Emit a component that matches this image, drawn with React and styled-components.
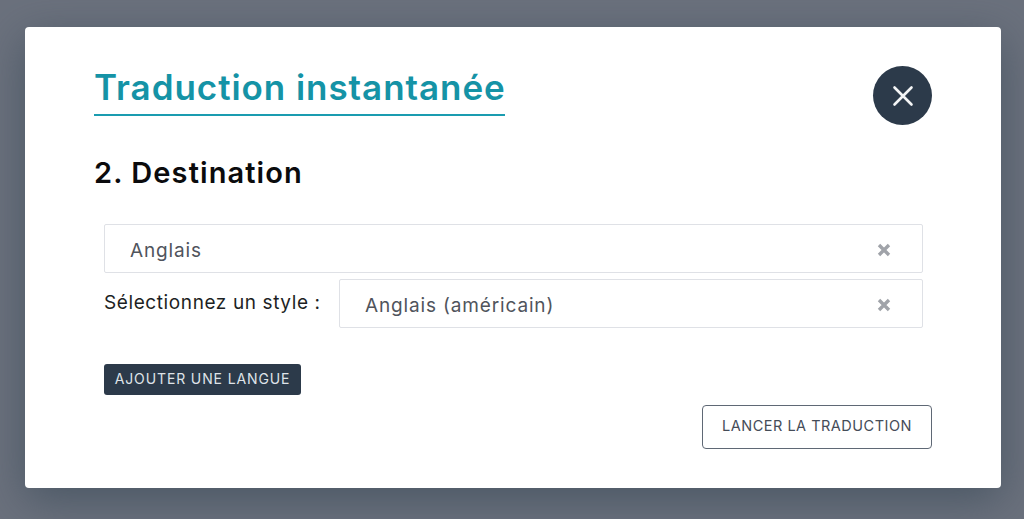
import React from 'react';
import styled, { createGlobalStyle } from 'styled-components';

const Global = createGlobalStyle`
  html, body { margin: 0; padding: 0; height: 100%; overflow: hidden; }
  body { font-family: Inter, "Noto Sans", sans-serif; }
  #root { height: 100%; }
`;

const Backdrop = styled.div`
  width: 1024px;
  height: 519px;
  box-sizing: border-box;
  padding: 27px 23px 31px 25px;
  background: #6b717d;
  overflow: hidden;
`;

const Modal = styled.div`
  box-sizing: border-box;
  height: 461px;
  padding: 42px 69px 0;
  background: #fff;
  border-radius: 4px;
  box-shadow: 0 12px 44px rgba(60, 75, 90, 0.7);
`;

const Header = styled.div`
  display: flex;
  justify-content: space-between;
  align-items: flex-start;
`;

const Title = styled.h1`
  margin: 0;
  width: 411px;
  height: 47px;
  box-sizing: border-box;
  border-bottom: 2px solid #1a9cb0;
  color: #1593a6;
  font-size: 35px;
  font-weight: 600;
  line-height: 36px;
  white-space: nowrap;
  letter-spacing: 0.95px;
`;

const CloseButton = styled.button`
  width: 59px;
  height: 59px;
  margin: -3px 0 0;
  padding: 0;
  border: 0;
  border-radius: 50%;
  background: #2c3a4a;
  display: flex;
  align-items: center;
  justify-content: center;
`;

const SectionTitle = styled.h2`
  margin: 0;
  padding-top: 30px;
  color: #0b0b0d;
  font-size: 29px;
  font-weight: 600;
  line-height: 36px;
  letter-spacing: 1.1px;
`;

const Fields = styled.div`
  margin: 33px 10px 0;
  display: flex;
  flex-direction: column;
  gap: 6px;
  width: 818.5px;
`;

const Select = styled.div`
  flex-grow: 1;
  box-sizing: border-box;
  height: 49px;
  padding: 0 31px 0 25px;
  display: flex;
  align-items: center;
  justify-content: space-between;
  border: 1px solid #dfe1e6;
  border-radius: 2px;
  color: #50545c;
  font-size: 19px;
  letter-spacing: 0.85px;
`;

const SelectValue = styled.span`
  margin-top: 4px;
`;

const StyleRow = styled.div`
  display: flex;
  align-items: flex-start;
`;

const StyleLabel = styled.label`
  width: 235px;
  flex: none;
  padding-top: 12px;
  color: #1d1f24;
  font-size: 19px;
  line-height: 24px;
  letter-spacing: 0.6px;
  white-space: nowrap;
`;

const AddButton = styled.button`
  display: block;
  width: 197px;
  height: 31px;
  margin: 36px 0 0 10px;
  padding: 0 0 2px;
  border: 0;
  border-radius: 3px;
  background: #2c3a4a;
  color: #dfe3e8;
  font-family: inherit;
  font-size: 14px;
  letter-spacing: 0.87px;
`;

const Footer = styled.div`
  display: flex;
  justify-content: flex-end;
  margin-top: 10px;
`;

const LaunchButton = styled.button`
  width: 230px;
  height: 44px;
  padding: 0 0 3px;
  background: #fff;
  border: 1px solid #5f6875;
  border-radius: 4px;
  color: #454c58;
  font-family: inherit;
  font-size: 14.5px;
  letter-spacing: 0.5px;
`;

const ClearGlyph = styled.svg`
  margin-top: 2px;
  flex: none;
`;

const CloseIcon = () => (
  <svg width="22" height="22" viewBox="0 0 22 22" aria-hidden="true">
    <path d="M2.5 2.5 19.5 19.5M19.5 2.5 2.5 19.5" stroke="#f4f5f6" strokeWidth="2.6" strokeLinecap="round" />
  </svg>
);

const ClearIcon = () => (
  <ClearGlyph width="14" height="14" viewBox="0 0 14 14" aria-hidden="true">
    <path d="M2 2 12 12M12 2 2 12" stroke="#a0a3a9" strokeWidth="3.4" />
  </ClearGlyph>
);

export default function App() {
  return (
    <Backdrop>
      <Global />
      <Modal>
        <Header>
          <Title>Traduction instantanée</Title>
          <CloseButton aria-label="Fermer"><CloseIcon /></CloseButton>
        </Header>
        <SectionTitle>2. Destination</SectionTitle>
        <Fields>
          <Select><SelectValue>Anglais</SelectValue><ClearIcon /></Select>
          <StyleRow>
            <StyleLabel>Sélectionnez un style :</StyleLabel>
            <Select><SelectValue>Anglais (américain)</SelectValue><ClearIcon /></Select>
          </StyleRow>
        </Fields>
        <AddButton>AJOUTER UNE LANGUE</AddButton>
        <Footer>
          <LaunchButton>LANCER LA TRADUCTION</LaunchButton>
        </Footer>
      </Modal>
    </Backdrop>
  );
}
